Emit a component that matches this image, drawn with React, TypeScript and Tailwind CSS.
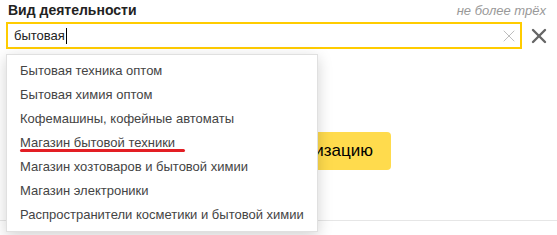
import { X } from 'lucide-react'

const SUGGESTIONS = [
  'Бытовая техника оптом',
  'Бытовая химия оптом',
  'Кофемашины, кофейные автоматы',
  'Магазин бытовой техники',
  'Магазин хозтоваров и бытовой химии',
  'Магазин электроники',
  'Распространители косметики и бытовой химии',
]

export default function App() {
  return (
    <div className="relative h-[235px] w-[557px] overflow-hidden bg-white font-['Liberation_Sans',Arial,sans-serif]">
      {/* ── Header ── */}
      <div className="flex h-[20px] items-center justify-between pl-[8px] pr-[11px] pt-[1px]">
        <span className="text-[14px] font-bold text-[#222]">Вид деятельности</span>
        <span className="text-[13px] italic text-[#999]">не более трёх</span>
      </div>

      {/* ── Input ── */}
      <div className="mt-[2px] flex items-center pl-[6px]">
        <div className="flex h-[27px] w-[516px] items-center border-2 border-[#fc0] pl-[6px] pr-[1px]">
          <span className="text-[13px] text-[#222]">бытовая</span>
          <span className="ml-[1px] h-[16px] w-px bg-black" />
          <span className="flex-1" />
          <X size={20} strokeWidth={1.1} className="text-[#b8b8b8]" />
        </div>
        <X size={24} strokeWidth={2.4} className="ml-[5px] text-[#666]" />
      </div>

      {/* ── Content under dropdown ── */}
      <div className="mt-[83px] flex">
        <div className="ml-[173px] flex h-[38px] w-[218px] items-center justify-end rounded-[4px] bg-[#ffdb4d] pr-[18px]">
          <span className="whitespace-nowrap text-[17px] text-black">Добавить организацию</span>
        </div>
      </div>
      <div className="mt-[50px] border-t border-[#e6e6e6]" />

      {/* ── Dropdown ── */}
      <div className="absolute left-[6px] top-[54px] w-[312px] border border-[#e0e0e0] bg-white py-[4px] shadow-[0_4px_14px_rgba(0,0,0,0.18)]">
        {SUGGESTIONS.map((s, i) => (
          <div key={s} className="relative flex h-[24px] items-center pl-[13px] text-[13px] text-[#444]">
            {s}
            {i === 3 && (
              <span className="absolute left-[13px] top-[18px] h-[3px] w-[165px] rounded-full bg-[#e31e24]" />
            )}
          </div>
        ))}
      </div>
    </div>
  )
}
